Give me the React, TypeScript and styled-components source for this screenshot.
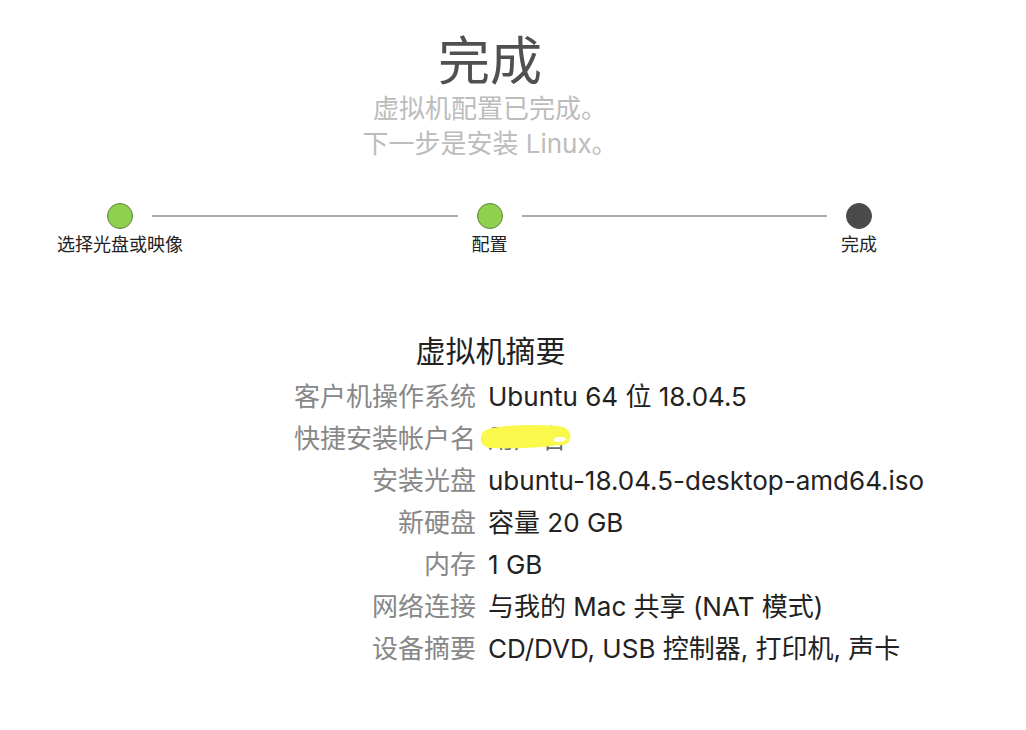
import styled, { createGlobalStyle } from "styled-components";

const GlobalStyle = createGlobalStyle`
	html, body {
		margin: 0;
		padding: 0;
		background: #ffffff;
	}
	body {
		font-family: Inter, "Noto Sans CJK SC", sans-serif;
	}
`;

type StepState = "done" | "current";

interface Step {
	label: string;
	state: StepState;
}

const steps: Step[] = [
	{ label: "选择光盘或映像", state: "done" },
	{ label: "配置", state: "done" },
	{ label: "完成", state: "current" },
];

interface SummaryRow {
	label: string;
	value: string;
	redacted?: boolean;
}

const summary: SummaryRow[] = [
	{ label: "客户机操作系统", value: "Ubuntu 64 位 18.04.5" },
	{ label: "快捷安装帐户名", value: "用户名", redacted: true },
	{ label: "安装光盘", value: "ubuntu-18.04.5-desktop-amd64.iso" },
	{ label: "新硬盘", value: "容量 20 GB" },
	{ label: "内存", value: "1 GB" },
	{ label: "网络连接", value: "与我的 Mac 共享 (NAT 模式)" },
	{ label: "设备摘要", value: "CD/DVD, USB 控制器, 打印机, 声卡" },
];

function App() {
	return (
		<>
			<GlobalStyle />
			<Page>
				<Header>
					<Title>完成</Title>
					<Subtitle>
						虚拟机配置已完成。
						<br />
						下一步是安装 Linux。
					</Subtitle>
				</Header>

				<Stepper>
					{steps.map((step, i) => (
						<StepGroup key={step.label} last={i === steps.length - 1}>
							<StepItem>
								<Dot state={step.state} />
								<StepLabel>{step.label}</StepLabel>
							</StepItem>
							{i < steps.length - 1 && <Connector />}
						</StepGroup>
					))}
				</Stepper>

				<Summary>
					<SummaryTitle>虚拟机摘要</SummaryTitle>
					<SummaryGrid>
						{summary.map((row) => (
							<Row key={row.label}>
								<Label>{row.label}</Label>
								<Value redacted={row.redacted}>
									{row.value}
									{row.redacted && (
										<Scribble viewBox="0 0 92 24" width="92" height="24">
											<path
												d="M6 5 C 18 0, 50 -1, 78 1 C 88 2, 92 8, 90 14 C 89 19, 84 21, 78 20 C 60 23, 30 24, 10 23 C 2 22, 0 16, 1 12 C 2 8, 3 6, 6 5 Z"
												fill="#f9f84b"
											/>
											<path
												d="M74 14 C 76 11, 84 11, 86 14 C 85 17, 78 18, 74 16 Z"
												fill="#ffffff"
											/>
										</Scribble>
									)}
								</Value>
							</Row>
						))}
					</SummaryGrid>
				</Summary>
			</Page>
		</>
	);
}

const Page = styled.div`
	width: 980px;
	padding-top: 33px;
`;

const Header = styled.div`
	display: flex;
	flex-direction: column;
	align-items: center;
	text-align: center;
`;

const Title = styled.h1`
	margin: 0;
	font-size: 52px;
	line-height: 58px;
	font-weight: 400;
	color: #505050;
`;

const Subtitle = styled.div`
	font-size: 26px;
	line-height: 35px;
	color: #bcbcbc;
`;

const Stepper = styled.div`
	display: flex;
	align-items: flex-start;
	width: 765px;
	margin: 42px 0 0 107px;
`;

const StepGroup = styled.div<{ last: boolean }>`
	display: flex;
	align-items: flex-start;
	flex: ${(props) => (props.last ? "0 0 auto" : "1 1 0")};
`;

const StepItem = styled.div`
	display: flex;
	flex-direction: column;
	align-items: center;
	width: 26px;
`;

const Dot = styled.div<{ state: StepState }>`
	width: 26px;
	height: 26px;
	border-radius: 50%;
	box-sizing: border-box;
	background: ${(props) => (props.state === "done" ? "#8fd14f" : "#4a4a4a")};
	border: 1px solid
		${(props) => (props.state === "done" ? "#5d7f3c" : "#4a4a4a")};
`;

const StepLabel = styled.div`
	margin-top: 4px;
	white-space: nowrap;
	font-size: 18px;
	line-height: 24px;
	color: #222222;
`;

const Connector = styled.div`
	flex: 1;
	height: 2px;
	margin: 12px 19px 0;
	background: #ababab;
`;

const Summary = styled.div`
	margin-top: 73px;
`;

const SummaryTitle = styled.div`
	text-align: center;
	font-size: 30px;
	line-height: 42px;
	color: #222222;
	padding-left: 1px;
`;

const SummaryGrid = styled.div`
	display: grid;
	grid-template-columns: 476px 1fr;
	column-gap: 12px;
	margin-top: 4px;
`;

const Row = styled.div`
	display: contents;
`;

const Label = styled.div`
	text-align: right;
	font-size: 26px;
	line-height: 42px;
	color: #888888;
	white-space: nowrap;
`;

const Value = styled.div<{ redacted?: boolean }>`
	position: relative;
	font-size: 26px;
	line-height: 42px;
	color: ${(props) => (props.redacted ? "#6a6a6a" : "#222222")};
	white-space: nowrap;
`;

const Scribble = styled.svg`
	position: absolute;
	left: -8px;
	top: 7px;
`;

export default App;
